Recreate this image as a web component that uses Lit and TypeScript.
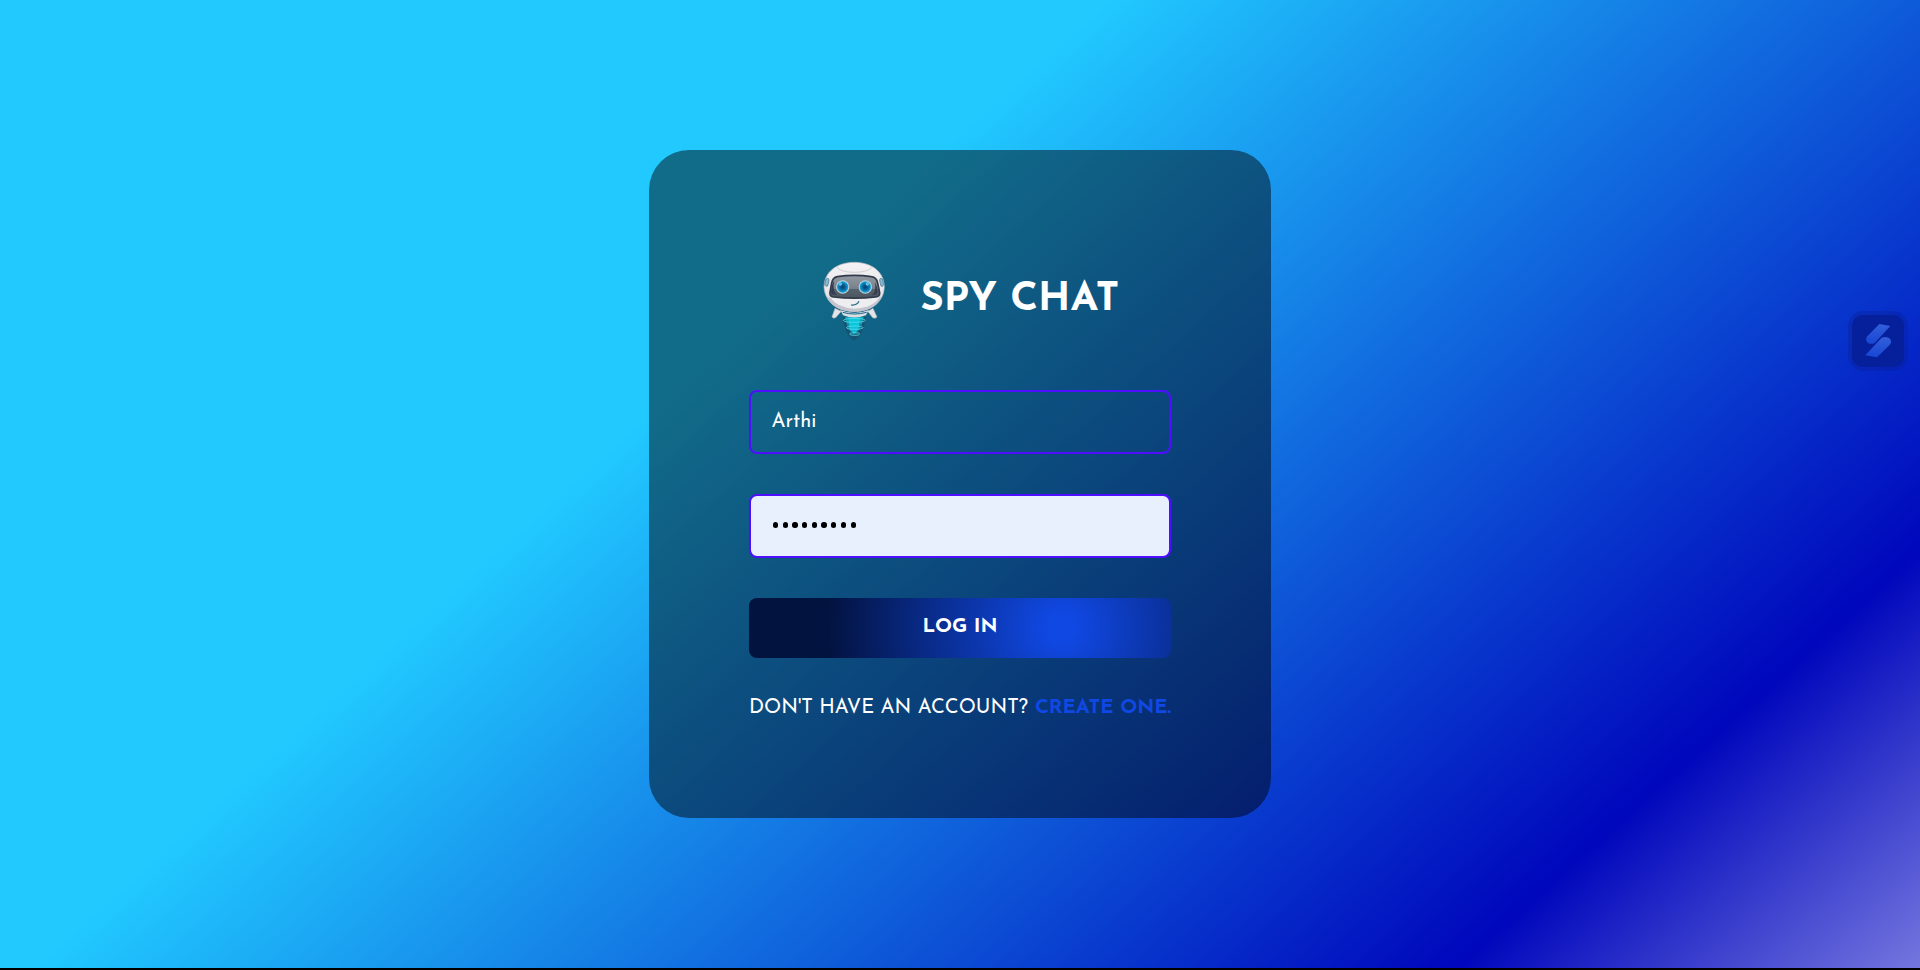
import { LitElement, html, css } from "lit";
import { customElement } from "lit/decorators.js";

@customElement("robot-logo")
class RobotLogo extends LitElement {
  static styles = css`
    :host { display: block; width: 80px; height: 95px; }
    svg { display: block; width: 100%; height: 100%; }
  `;
  render() {
    return html`<svg viewBox="0 0 240 285">
      <defs>
        <linearGradient id="head" x1="0" y1="0" x2="0" y2="1">
          <stop offset="0" stop-color="#f4f2f4" /><stop offset=".65" stop-color="#e6e5e9" /><stop offset="1" stop-color="#b9bac4" />
        </linearGradient>
        <linearGradient id="jet" x1="0" y1="0" x2="0" y2="1">
          <stop offset="0" stop-color="#09d9ea" /><stop offset=".6" stop-color="#12a6c4" /><stop offset="1" stop-color="#1c607d" stop-opacity=".4" />
        </linearGradient>
        <linearGradient id="visor" x1="0" y1="0" x2="0" y2="1">
          <stop offset="0" stop-color="#9299a2" /><stop offset=".6" stop-color="#77808a" /><stop offset=".62" stop-color="#57616b" /><stop offset="1" stop-color="#4b5660" />
        </linearGradient>
        <radialGradient id="iris"><stop offset="0" stop-color="#073f70" /><stop offset=".4" stop-color="#075b94" /><stop offset="1" stop-color="#12a8dd" /></radialGradient>
      </defs>
      <path d="M84 198Q87 250 117 270Q148 250 153 198Z" fill="#1a4a66" opacity=".65" />
      <path d="M90 198Q96 238 118 254Q140 238 146 198Z" fill="url(#jet)" opacity=".6" />
      <path d="M100 200L104 236L118 250L130 236L136 200Z" fill="#08dbec" opacity=".7" />
      <g fill="none" stroke="#55dcea" stroke-width="2.5">
        <ellipse cx="118" cy="208" rx="33" ry="6" /><ellipse cx="119" cy="230" rx="25" ry="5" /><ellipse cx="119" cy="249" rx="15" ry="4" />
      </g>
      <path d="M60 172L51 197Q53 204 62 200L79 181ZM174 172L186 198Q181 204 173 200L158 181Z" fill="#e3e3e8" stroke="#a7a8b5" stroke-width="2" />
      <path d="M76 177Q118 195 161 177L153 193Q118 206 84 193Z" fill="#d9dde3" />
      <path d="M83 184Q118 194 155 184" fill="none" stroke="#176789" stroke-width="3" />
      <path d="M27 107C28 62 67 34 118 34S207 62 208 107C207 152 169 182 118 182S28 151 27 107Z" fill="url(#head)" stroke="#b2b2bb" stroke-width="2" />
      <path d="M35 137Q117 166 200 137Q180 180 118 182Q55 180 35 137Z" fill="#c4c5ce" />
      <path d="M45 139Q118 149 193 139Q174 171 119 173Q66 171 45 139Z" fill="#eeedf0" />
      <path d="M65 48Q78 64 118 64T172 48" fill="none" stroke="#c1bdc4" stroke-width="2" />
      <path d="M67 77Q118 69 169 77Q185 79 188 96L194 125Q195 137 182 138Q118 145 55 138Q43 136 45 124L50 96Q53 80 67 77Z" fill="url(#visor)" stroke="#323b4b" stroke-width="5" />
      <path d="M55 92Q45 117 50 129L66 133Q52 120 57 91ZM180 92Q191 117 186 129L171 133Q185 120 180 92Z" fill="#353d50" />
      <path d="M33 84Q43 78 42 90L38 105Q32 109 29 100ZM202 84Q193 78 194 90L198 105Q204 109 206 100Z" fill="#8eb8ce" stroke="#397393" stroke-width="2" />
      <g><circle cx="83" cy="108" r="20" fill="#c0d3dc" /><circle cx="83" cy="108" r="17" fill="url(#iris)" /><circle cx="151" cy="108" r="20" fill="#c0d3dc" /><circle cx="151" cy="108" r="17" fill="url(#iris)" /></g>
      <circle cx="76" cy="99" r="5" fill="#64c2e5" /><circle cx="157" cy="99" r="5" fill="#64c2e5" />
      <path d="M108 162Q126 164 132 151" fill="none" stroke="#216586" stroke-width="3.5" />
    </svg>`;
  }
}

@customElement("app-root")
class AppRoot extends LitElement {
  static styles = css`
    :host { display: block; height: 970px; background: #000; font-family: "Josefin Sans", Lato, sans-serif; color: #fff; font-size: 20px; }
    * { box-sizing: border-box; }
    .page { height: 968px; display: flex; align-items: center; justify-content: center; background: linear-gradient(138deg, #21c9ff 0%, #21c9ff 37%, #0007bc 84.5%, #7476de 100%); }
    .card { width: 622px; height: 668px; border-radius: 40px; background: #00000076; padding: 100px; display: flex; flex-direction: column; }
    .card > * { flex-shrink: 0; }
    .brand { height: 100px; display: flex; align-items: flex-start; padding: 1px 0 0 66px; }
    robot-logo { flex: none; }
    h1 { margin: 0 0 0 25.5px; font-size: 40px; line-height: 48px; font-weight: 700; white-space: nowrap; padding-top: 25px; }
    svg { display: block; overflow: visible; }
    .field { height: 64px; margin-top: 40px; border: 2px solid #4e0eff; border-radius: 8px; padding: 0 20.5px; display: flex; align-items: center; }
    .password { background: #e8f0fe; gap: 4.4px; padding-left: 22px; }
    .dot { width: 5.3px; height: 5.3px; border-radius: 50%; background: #000; margin-bottom: 2px; }
    button { margin-top: 40px; height: 60px; border: 0; border-radius: 8px; background: radial-gradient(circle at 74% 50%, #1048e3 0, #1048e3 4%, #031340 74.5%); display: flex; align-items: center; justify-content: center; color: #fff; font: inherit; font-weight: 700; padding: 0 0 2px; }
    .foot { margin-top: 35px; white-space: nowrap; height: 30px; line-height: 30px; display: flex; justify-content: space-between; font-weight: 400; }
    .foot b { color: #1048e3; font-weight: 700; }
    .widget { position: absolute; left: 1848px; top: 311px; width: 60px; height: 60px; border-radius: 15px; border: 4px solid #081e9050; background: #06209b; background-clip: padding-box; }
  `;
  render() {
    return html`<main class="page"><section class="card">
      <div class="brand"><robot-logo></robot-logo><h1>SPY CHAT</h1></div>
      <div class="field">Arthi</div>
      <div class="field password">${Array.from({ length: 9 }, () => html`<i class="dot"></i>`)}</div>
      <button>LOG IN</button>
      <div class="foot"><span>DON'T HAVE AN ACCOUNT?</span><b>CREATE ONE.</b></div>
    </section></main>
    <div class="widget"><svg width="52" height="52" viewBox="96 75 156 156"><defs><linearGradient id="s" x1="0" y1="0" x2="0" y2="1"><stop stop-color="#335fda" /><stop offset="1" stop-color="#1746d4" /></linearGradient></defs><path d="M178 102L211 108L163 160Q150 164 143 158Q134 149 142 139Z" fill="url(#s)" /><path d="M185 143Q201 138 210 146Q217 156 209 165L171 202L136 196Z" fill="url(#s)" /></svg></div>`;
  }
}
